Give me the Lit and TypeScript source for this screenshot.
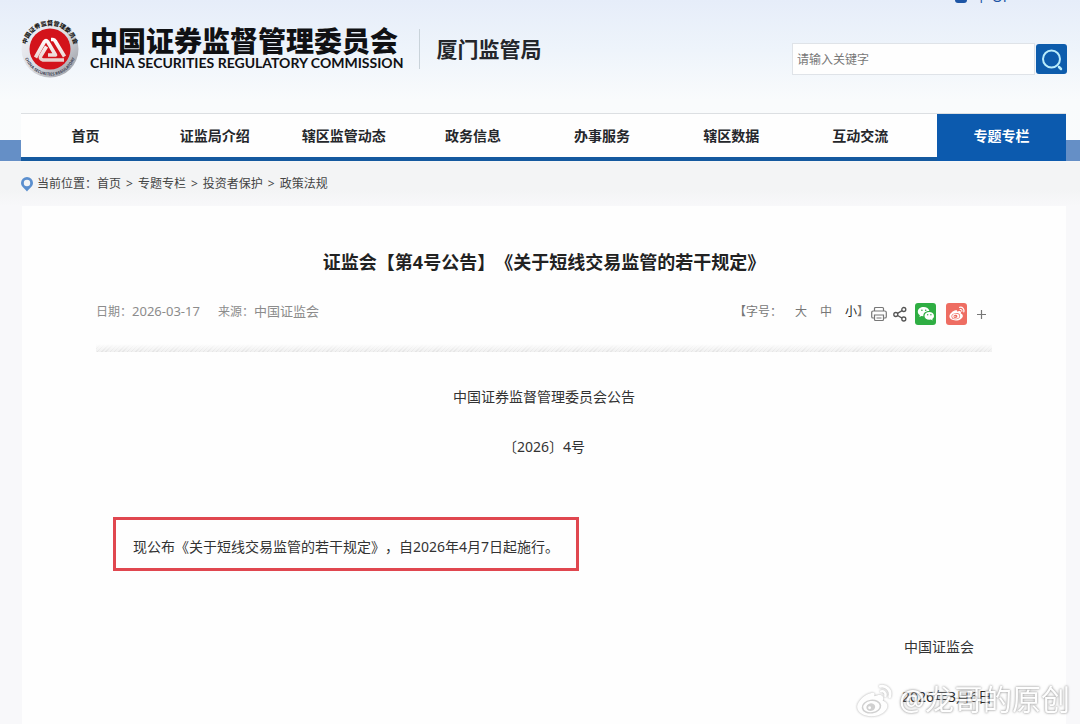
import { LitElement, html, css, svg } from "lit";
import { customElement, property } from "lit/decorators.js";

const NAV = ["首页", "证监局介绍", "辖区监管动态", "政务信息", "办事服务", "辖区数据", "互动交流", "专题专栏"];
const CRUMBS = ["首页", "专题专栏", "投资者保护", "政策法规"];

const weiboMark = (body: string, eye: string) => svg`
  <path fill=${body} d="M13.4 9.2c-4.200.3-11.600 6.800-11.600 11.600 0 4.800 5.600 8 12 8 8.200 0 13.800-4.800 13.800-8.800 0-2.600-2.200-3.800-4-4.400.8-2.400.4-4.200-1.400-4.700-1.700-.5-4 .2-5.800 1 .7-2 .2-3.600-3-2.700z"/>
  <ellipse cx="14" cy="20.600" rx="8.400" ry="5.900" fill=${eye} transform="rotate(-8 14 20.600)"/>
  <ellipse cx="14" cy="20.600" rx="7" ry="4.700" fill=${body} transform="rotate(-8 14 20.600)"/>
  <ellipse cx="13.400" cy="21" rx="3.800" ry="3.200" fill=${eye} transform="rotate(-14 13.400 21)"/>
  <circle cx="12.400" cy="21.600" r="1.200" fill=${body}/>
  <g fill="none" stroke=${body} stroke-linecap="round">
    <path stroke-width="2.400" d="M21.500 3.400c5.300-1 9.600 3.600 8 8.800"/>
    <path stroke-width="2" d="M22.200 7.600c2.300-.5 4.300 1.500 3.600 3.800"/>
  </g>`;

@customElement("csrc-emblem")
export class CsrcEmblem extends LitElement {
  static styles = css`
    :host { display: block; flex: none; }
    svg { display: block; width: 60px; height: 60px; }
    .ring { font: 900 6px "Noto Sans CJK SC", sans-serif; fill: #1c1c20; }
    .ring-en { font: 700 4px "Noto Sans", sans-serif; fill: #3c3f52; }
  `;
  render() {
    return html`<svg viewBox="0 0 60 60" role="img" aria-label="中国证监会标志">
      <defs>
        <linearGradient id="rim" x1="0" y1="0" x2="1" y2="1">
          <stop offset="0" stop-color="#f4f5f9" /><stop offset=".5" stop-color="#dcdee4" /><stop offset="1" stop-color="#8f9299" />
        </linearGradient>
        <linearGradient id="metal" gradientUnits="userSpaceOnUse" x1="0" y1="20" x2="0" y2="44">
          <stop offset="0" stop-color="#fff" /><stop offset="1" stop-color="#e6cbc7" />
        </linearGradient>
        <path id="top" d="M7 37A24 24 0 1 1 53 37" />
        <path id="bottom" d="M3.500 30A26.500 26.500 0 0 0 56.500 30" />
      </defs>
      <circle cx="30" cy="30" r="28.500" fill="url(#rim)" />
      <circle cx="30" cy="30" r="20.500" fill="#d3131b" />
      <text class="ring"><textPath href="#top" startOffset="50%" text-anchor="middle">中国证券监督管理委员会</textPath></text>
      <text class="ring-en"><textPath href="#bottom" startOffset="50%" text-anchor="middle">CHINA SECURITIES REGULATORY</textPath></text>
      <g fill="none" stroke="url(#metal)" stroke-width="3.600" stroke-linejoin="round">
        <path d="M15.500 38.500L24.500 22.500Q26 20.500 27.500 22.500L35.500 36H28" />
        <path d="M31 20.500h2q1.500 0 2.200 1.500L44.500 37.500" />
        <path d="M44 41H23q-4-1-2-4.500L26.500 27.500" />
      </g>
    </svg>`;
  }
}

@customElement("site-header")
export class SiteHeader extends LitElement {
  static styles = css`
    :host { display: block; }
    .utility { height: 5px; overflow: hidden; display: flex; align-items: flex-end; justify-content: flex-end; padding-right: 70px; color: #1d55a5; font-size: 14px; line-height: 16px; }
    .utility a { color: inherit; text-decoration: none; display: flex; align-items: flex-end; gap: 6px; }
    .utility svg { width: 14px; height: 18px; }
    .bar { display: flex; align-items: center; height: 88px; padding: 0 13px 0 20px; }
    .brand { display: flex; align-items: center; gap: 10px; color: #101114; }
    .names { display: flex; flex-direction: column; }
    .cn { font-size: 28px; font-weight: 900; line-height: 28px; white-space: nowrap; }
    .en { font-family: Lato, "Noto Sans", sans-serif; font-size: 14px; font-weight: 700; line-height: 16px; white-space: nowrap; }
    .bureau { margin-left: 16px; padding-left: 16px; border-left: 1px solid #c9d3da; font-size: 21px; font-weight: 700; line-height: 40px; color: #24262b; white-space: nowrap; }
    form { margin: 20px 0 0 auto; display: flex; gap: 1px; }
    input { box-sizing: border-box; width: 243px; height: 32px; padding: 0 4px; border: 1px solid #dfe3e8; background: #fefefe; font: 12px/20px "Noto Sans", "Noto Sans CJK SC", sans-serif; outline: none; }
    input::placeholder { color: #777; opacity: 1; }
    button { width: 31px; height: 30px; margin-top: 1px; padding: 0; border: 0; border-radius: 3px; background: #0d5cac; display: grid; place-items: center; }
    button svg { width: 24px; height: 24px; }
  `;
  render() {
    return html`
      <div class="utility"><a href="#"><svg viewBox="0 0 14 18" aria-hidden="true"><rect x="1" y="2" width="12" height="14" rx="3" fill="currentColor" /></svg>个 OF</a></div>
      <div class="bar">
        <div class="brand">
          <csrc-emblem></csrc-emblem>
          <div class="names">
            <span class="cn">中国证券监督管理委员会</span>
            <span class="en">CHINA SECURITIES REGULATORY COMMISSION</span>
          </div>
        </div>
        <div class="bureau">厦门监管局</div>
        <form role="search" @submit=${(e: Event) => e.preventDefault()}>
          <input type="text" aria-label="搜索" placeholder="请输入关键字" />
          <button aria-label="搜索"><svg viewBox="0 0 24 24" fill="none" stroke="#b9ecfb" stroke-linecap="round"><circle cx="11.500" cy="12" r="8.500" stroke-width="2" /><path d="M19 20l2 2" stroke-width="2.500" /></svg></button>
        </form>
      </div>`;
  }
}

@customElement("site-nav")
export class SiteNav extends LitElement {
  @property() current = "专题专栏";
  static styles = css`
    :host { display: block; padding: 0 14px 0 21px; background: linear-gradient(#658fc6, #658fc6) 0 100% / 100% 21px no-repeat; }
    nav { box-sizing: border-box; height: 48px; display: grid; grid-template-columns: repeat(7, 1fr) 12px 1fr; border-top: 1px solid #dcdfe2; background: linear-gradient(#14599f, #14599f) 0 100% / 100% 4px no-repeat, #fefefe; }
    a { display: flex; align-items: center; justify-content: center; padding-bottom: 3px; color: #25272b; font-size: 14px; font-weight: 700; line-height: 20px; text-decoration: none; white-space: nowrap; }
    .on { grid-column: 9; background: #0c5aae; color: #fff; }
  `;
  render() {
    return html`<nav>${NAV.map((n) => html`<a href="#" class=${n === this.current ? "on" : ""}>${n}</a>`)}</nav>`;
  }
}

@customElement("article-tools")
export class ArticleTools extends LitElement {
  static styles = css`
    :host { display: flex; align-items: center; padding-right: 6px; color: #777; font-size: 12px; line-height: 20px; }
    .sizes { display: flex; margin-right: 2px; }
    .sizes button { margin: 0 0 0 13px; padding: 0; border: 0; background: none; color: inherit; font: inherit; }
    .sizes .on { color: #222; }
    .tool { display: block; margin-top: 5px; }
    svg { display: block; }
    .print { margin-right: 5px; }
    .share { margin-right: 7px; }
    .wechat, .weibo { margin-right: 10px; }
    .small { width: 16px; height: 16px; }
    .big { width: 21px; height: 22px; }
    .plus { width: 9px; height: 16px; }
  `;
  render() {
    return html`
      <div class="sizes"><span>【字号：</span><button>大</button><button>中</button><button class="on">小</button><span>】</span></div>
      <a class="tool print" href="#" aria-label="打印"><svg class="small" viewBox="0 0 16 16" fill="none" stroke="#777" stroke-width="1.200"><path d="M3.500 5V2.500q0-1 1-1h7q1 0 1 1V5M3 12H2q-1.300 0-1.300-1.300V6.500Q.7 5 2.200 5h11.600q1.500 0 1.500 1.500v4.200Q15.300 12 14 12h-1M3.500 9h9v4.500q0 1-1 1h-7q-1 0-1-1zM5.500 12h5" /></svg></a>
      <a class="tool share" href="#" aria-label="分享"><svg class="small" viewBox="0 0 16 16" fill="none" stroke="#555" stroke-width="1.300"><circle cx="3.800" cy="8.500" r="2" /><circle cx="11.800" cy="3.500" r="2" /><circle cx="11.800" cy="13" r="2" /><path d="M5.500 7.400l4.600-2.800M5.600 9.500l4.500 2.600" /></svg></a>
      <a class="tool wechat" href="#" aria-label="微信"><svg class="big" viewBox="0 0 21 22"><rect width="21" height="22" rx="3" fill="#2fae43" /><path fill="#fff" d="M8.700 4C5.400 4 2.800 6 2.800 8.700c0 1.500.8 2.700 2.100 3.600l-.5 1.800 2-1.100 2 .3c-.5-3.200 2.200-5.600 6-5.400C13.800 5.600 11.600 4 8.700 4z" /><path fill="#fff" d="M19 12.900c0-2.200-2.100-3.900-4.700-3.900s-4.800 1.700-4.800 3.900 2.200 3.900 4.800 3.900l1.600-.2 1.800 1-.5-1.600c1.100-.7 1.800-1.900 1.800-3.100z" /><g fill="#2fae43"><circle cx="6.900" cy="7.300" r=".8" /><circle cx="10.700" cy="7.300" r=".8" /><circle cx="12.700" cy="11.800" r=".7" /><circle cx="15.900" cy="11.800" r=".7" /></g></svg></a>
      <a class="tool weibo" href="#" aria-label="微博"><svg class="big" viewBox="0 0 21 22"><rect width="21" height="22" rx="3" fill="#ee6d62" /><g transform="translate(2.500 2.500) scale(.52)">${weiboMark("#fff", "#ee6d62")}</g></svg></a>
      <a class="tool" href="#" aria-label="更多"><svg class="plus" viewBox="0 0 9 16" stroke="#777" stroke-width="1.200"><path d="M4.500 4v9M0 8.500h9" /></svg></a>`;
  }
}

@customElement("app-root")
export class AppRoot extends LitElement {
  static styles = css`
    :host { display: block; position: relative; min-height: 100vh; overflow: hidden; background: linear-gradient(#e6edf9, #eef4fb 50px, #f9fbfc 100px, #fafbfc 160px, #f3f4f5 162px, #f3f4f5 190px, #f8f8fa 206px); font-family: "Noto Sans", "Noto Sans CJK SC", sans-serif; color: #333; text-spacing-trim: space-all; }
    site-nav { margin-top: 20px; }
    .crumbs { display: flex; align-items: center; padding: 12px 20px 0; font-size: 12px; line-height: 22px; color: #444; }
    .crumbs svg { width: 14px; height: 16px; margin-right: 3px; }
    .crumbs a { color: inherit; text-decoration: none; }
    .crumbs i { margin: 0 5px; font-style: normal; }
    main { margin: 11px 14px 0 22px; padding: 42px 74px 20px; background: #fefefe; }
    h1 { margin: 0; font-size: 18px; line-height: 28px; font-weight: 700; text-align: center; color: #222; white-space: nowrap; }
    .meta { display: flex; align-items: center; justify-content: space-between; margin-top: 22px; color: #8c8c8c; }
    .facts { display: flex; gap: 18px; font-size: 12px; line-height: 20px; }
    .facts div { display: flex; align-items: baseline; }
    .value { font-size: 13px; }
    .rule { height: 8px; margin: 19px 0 0; background: linear-gradient(#fefefe, transparent), repeating-linear-gradient(135deg, #e4e4e4 0 1px, #f0f0f0 1px 3px); }
    .body { font-size: 14px; line-height: 20px; }
    p { margin: 0; }
    .center { text-align: center; margin-top: 30px; }
    .body .center:first-child { margin-top: 35px; }
    .notice { display: inline-block; margin: 60px 0 0 17px; padding: 17px 17px 11px; border: 3px solid #e0474f; font-size: 14px; line-height: 20px; }
    .signer { text-align: right; margin: 66px 18px 0 0; }
    .date { text-align: right; margin: 30px 0 0; color: #222; }
    .mark { position: absolute; right: 10px; bottom: 7px; display: flex; align-items: center; gap: 4px; font-size: 29px; line-height: 40px; color: #fff; text-shadow: 0 0 2px #888, 0 0 3px #aaa; white-space: nowrap; opacity: .85; }
    .mark svg { width: 40px; height: 36px; filter: drop-shadow(0 0 1px #999); }
  `;
  render() {
    return html`
      <site-header></site-header>
      <site-nav></site-nav>
      <div class="crumbs">
        <svg viewBox="0 0 14 16" aria-hidden="true"><path fill="#5b8fce" fill-rule="evenodd" d="M7 1a6 6 0 0 1 6 6c0 3.500-4 5.500-6 8.500C5 12.500 1 10.500 1 7a6 6 0 0 1 6-6zm0 2.800a3.200 3.200 0 1 0 0 6.400 3.200 3.200 0 0 0 0-6.400z" /></svg>
        <span>当前位置：</span>
        ${CRUMBS.map((c, i) => html`${i ? html`<i>&gt;</i>` : ""}<a href="#">${c}</a>`)}
      </div>
      <main>
        <h1>证监会【第4号公告】《关于短线交易监管的若干规定》</h1>
        <div class="meta">
          <div class="facts">
            <div>日期：<span class="value">2026-03-17</span></div>
            <div>来源：<span class="value">中国证监会</span></div>
          </div>
          <article-tools></article-tools>
        </div>
        <div class="rule"></div>
        <div class="body">
          <p class="center">中国证券监督管理委员会公告</p>
          <p class="center">〔2026〕4号</p>
          <p class="notice">现公布《关于短线交易监管的若干规定》，自2026年4月7日起施行。</p>
          <p class="signer">中国证监会</p>
          <p class="date">2026年3月6日</p>
        </div>
      </main>
      <div class="mark"><svg viewBox="0 0 34 30" aria-hidden="true">${weiboMark("#fff", "#c9c9c9")}</svg><span>@龙哥的原创</span></div>`;
  }
}
